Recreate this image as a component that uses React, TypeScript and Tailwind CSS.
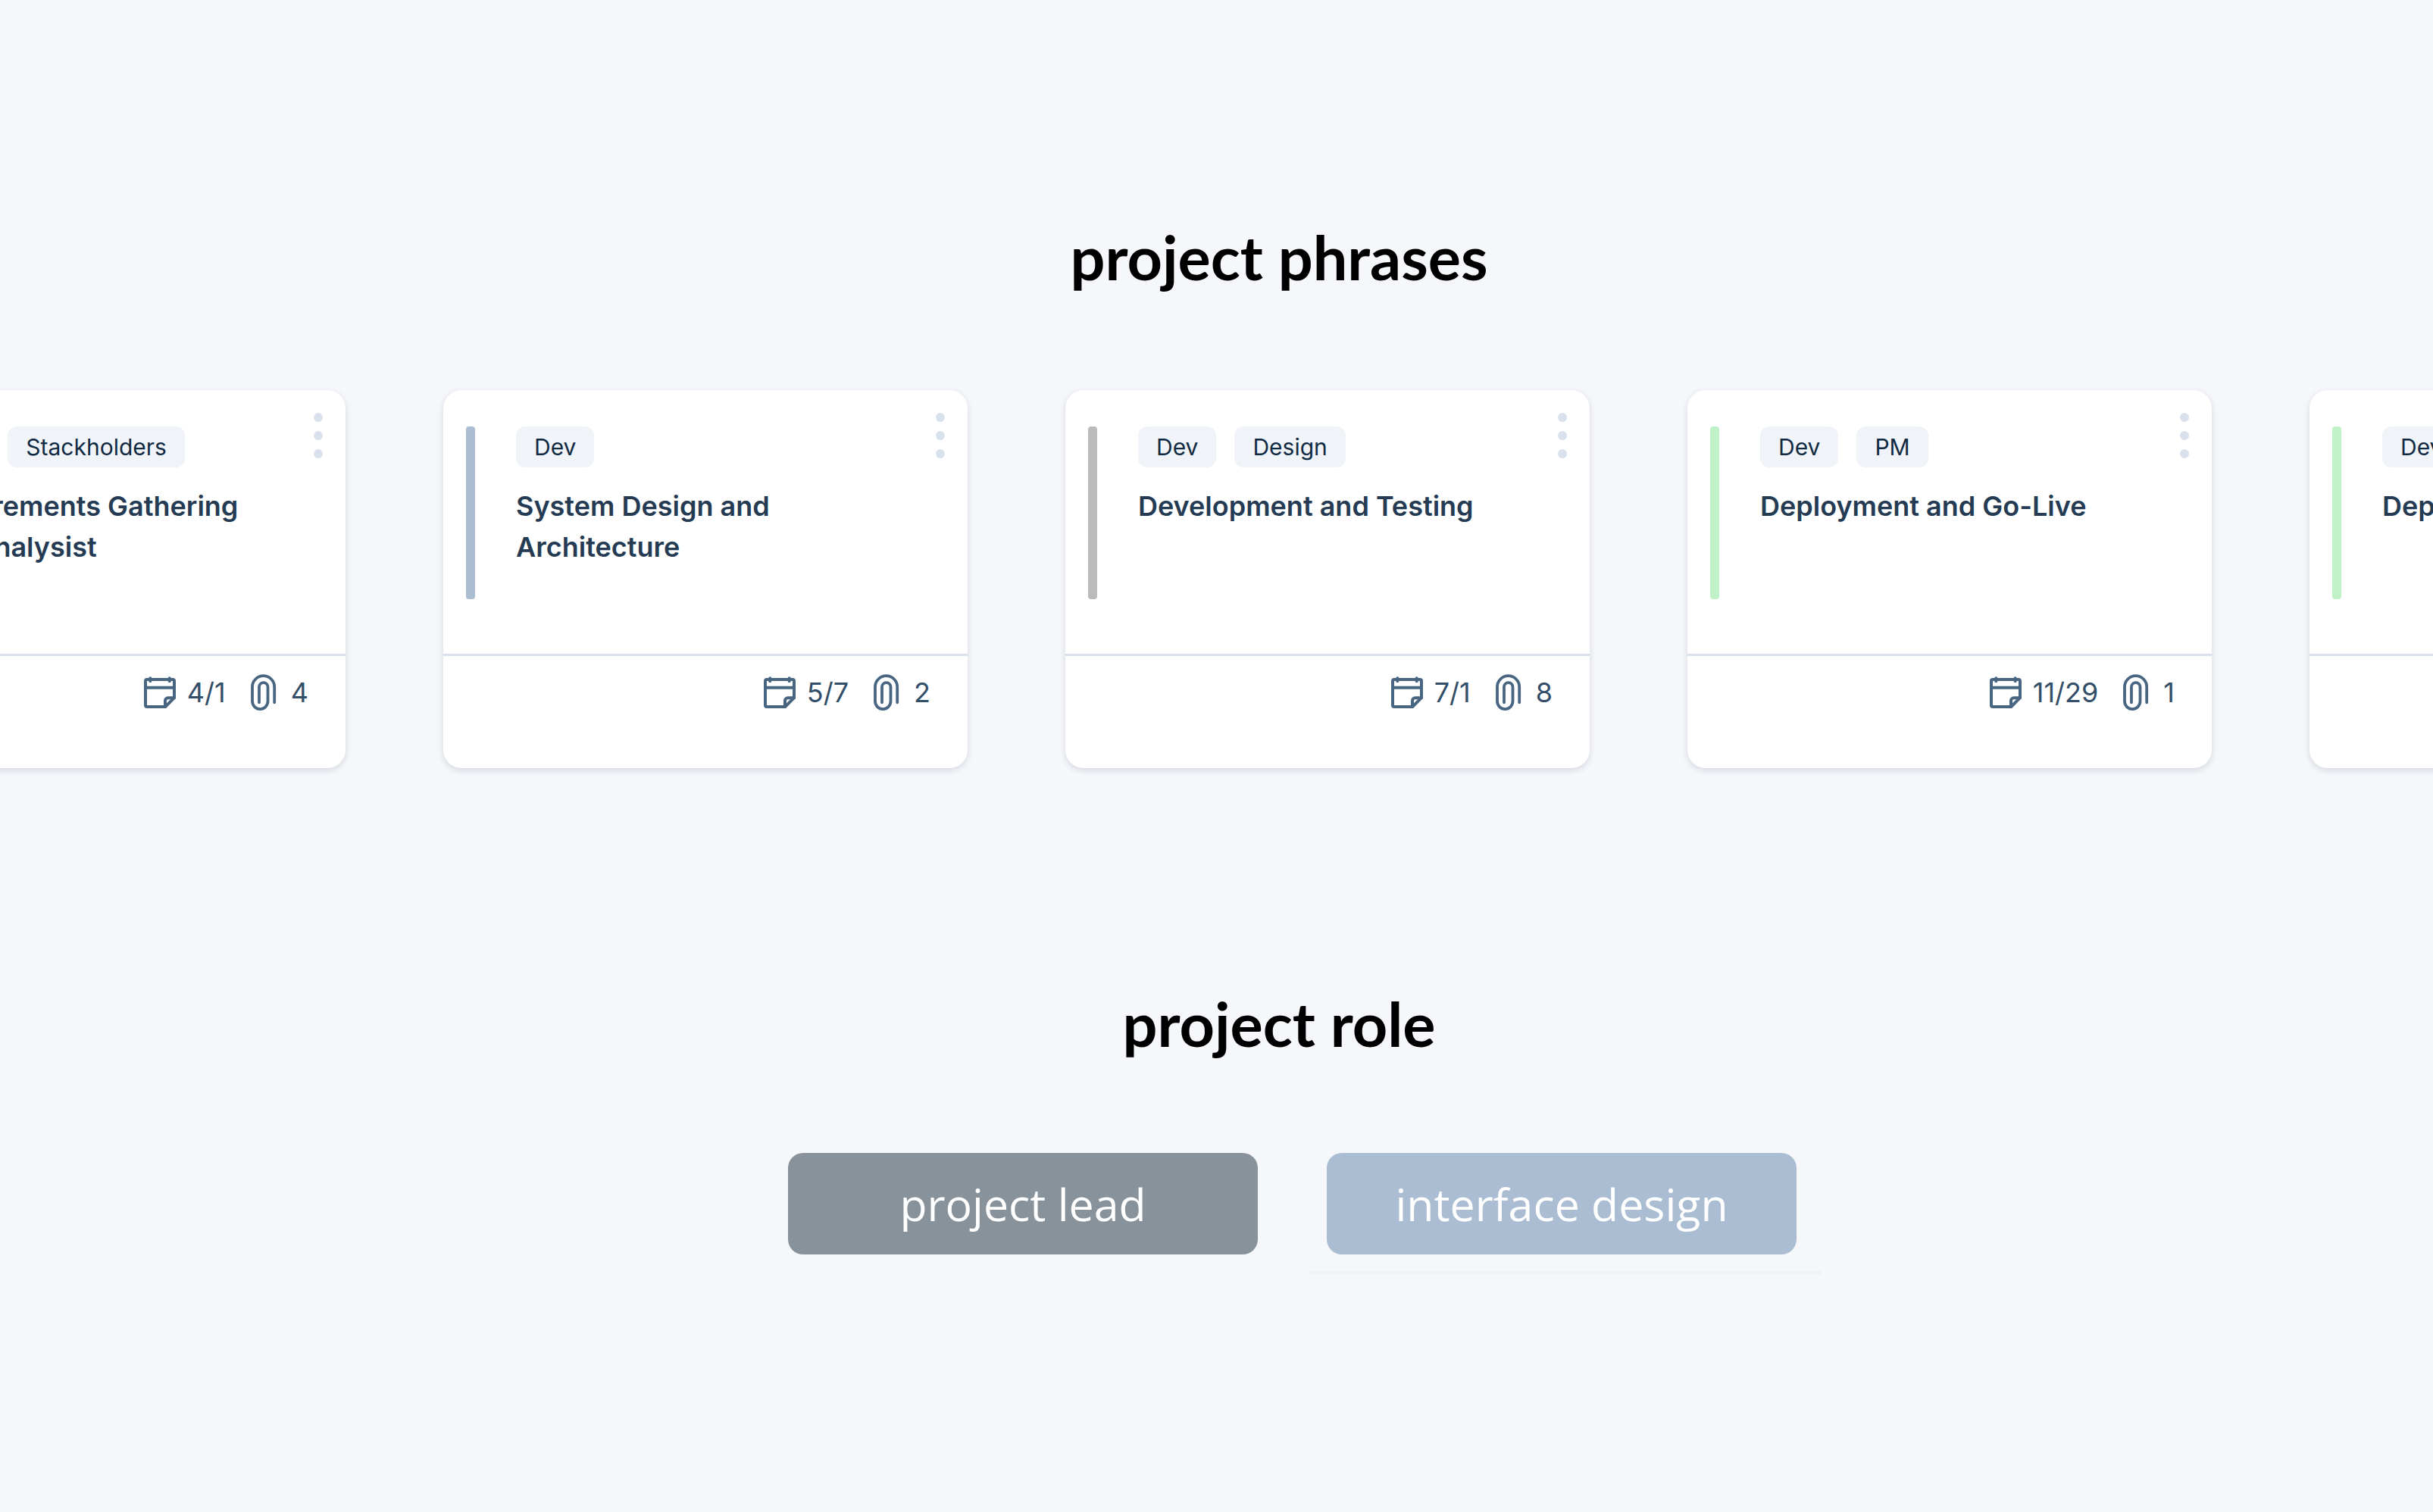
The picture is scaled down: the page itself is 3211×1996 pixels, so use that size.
type Phase = {
  id: string;
  width: string;
  accent: string;
  tags: string[];
  title: string;
  date: string;
  files: number;
};

const phases: Phase[] = [
  { id: "requirements", width: "w-[660px]", accent: "bg-[#f0c9c9]", tags: ["PM", "Stackholders"], title: "Requirements Gathering and Analysist", date: "4/1", files: 4 },
  { id: "architecture", width: "w-[692px]", accent: "bg-[#abbdd2]", tags: ["Dev"], title: "System Design and Architecture", date: "5/7", files: 2 },
  { id: "development", width: "w-[692px]", accent: "bg-[#bbbbbb]", tags: ["Dev", "Design"], title: "Development and Testing", date: "7/1", files: 8 },
  { id: "deployment", width: "w-[692px]", accent: "bg-[#c1f2c7]", tags: ["Dev", "PM"], title: "Deployment and Go-Live", date: "11/29", files: 1 },
  { id: "deployment-next", width: "w-[692px]", accent: "bg-[#c1f2c7]", tags: ["Dev", "PM"], title: "Deployment and Go-Live", date: "11/29", files: 1 },
];

function CalendarNote() {
  return (
    <svg viewBox="0 0 48 48" className="size-12" fill="none" stroke="#486581" strokeWidth="4" strokeLinecap="round" strokeLinejoin="round" aria-hidden="true">
      <path d="M31.2 43H7a2 2 0 0 1-2-2V9a2 2 0 0 1 2-2h34a2 2 0 0 1 2 2v22.2z" />
      <path d="M5 17.7h38" />
      <path d="M11.3 5.3v4M36.7 5.3v4" />
      <path d="M31 43v-8a3.7 3.7 0 0 1 3.7-3.7H43" />
    </svg>
  );
}

function PaperClip() {
  return (
    <svg viewBox="0 0 48 48" className="size-12" fill="none" stroke="#486581" strokeWidth="3.8" strokeLinecap="round" aria-hidden="true">
      <path d="M38.2 37.3V16.8a14.6 14.6 0 0 0-29.2 0v19a10.25 10.25 0 0 0 20.5 0v-19a5.75 5.75 0 0 0-11.5 0v20.5" />
    </svg>
  );
}

function PhaseCard({ phase }: { phase: Phase }) {
  return (
    <article className={`shrink-0 rounded-3xl bg-white shadow-[0_3px_9px_rgba(20,30,60,0.14)] ${phase.width}`}>
      <div className="flex h-[348px] items-start px-[30px] pt-[30px]">
        <div className={`mt-[18px] h-[228px] w-3 shrink-0 rounded-[4px] ${phase.accent}`} />
        <div className="mt-[18px] ml-[54px] w-[480px] shrink-0">
          <ul className="flex gap-6">
            {phase.tags.map((tag) => (
              <li key={tag} className="rounded-xl bg-[#f0f4f8] px-6 text-[30px] leading-[54px] text-[#102a43]">
                {tag}
              </li>
            ))}
          </ul>
          <h3 className="mt-6 text-4xl leading-[54px] font-semibold text-[#243b53]">{phase.title}</h3>
        </div>
        <button type="button" aria-label={`Options for ${phase.title}`} className="ml-auto flex flex-col gap-3">
          <span className="size-3 rounded-full bg-[#d9e2ec]" />
          <span className="size-3 rounded-full bg-[#d9e2ec]" />
          <span className="size-3 rounded-full bg-[#d9e2ec]" />
        </button>
      </div>
      <div className="flex items-center justify-end gap-[26px] border-t-3 border-[#d9e2ec] px-[49px] pt-6 pb-19 text-4xl leading-[48px] text-[#334e68]">
        <span className="flex items-center gap-3">
          <CalendarNote />
          {phase.date}
        </span>
        <span className="flex items-center gap-3">
          <PaperClip />
          {phase.files}
        </span>
      </div>
    </article>
  );
}

function SectionHeading({ children }: { children: string }) {
  return (
    <h2 className="pl-[165px] text-center font-['Lato',sans-serif] text-[81px] leading-24 font-bold text-black">{children}</h2>
  );
}

export default function App() {
  return (
    <main className="min-h-screen overflow-hidden bg-[#f5f7fb] pt-[291px] pb-[314px] font-['Inter',sans-serif]">
      <section>
        <SectionHeading>project phrases</SectionHeading>
        <div className="mt-32 flex justify-center gap-[129px] pl-[325px]">
          {phases.map((phase) => (
            <PhaseCard key={phase.id} phase={phase} />
          ))}
        </div>
      </section>

      <section className="mt-[289px]">
        <SectionHeading>project role</SectionHeading>
        <div className="mt-[123px] flex items-start justify-center gap-[67px] pl-[233px] font-['Open_Sans',sans-serif] text-[59px] text-white">
          <button type="button" className="h-[134px] w-[620px] rounded-[20px] bg-[#88929b]">
            project lead
          </button>
          <div className="border-b-4 border-[#eff3f7] pr-[33px] pb-[22px] pl-6">
            <button type="button" className="h-[134px] w-[620px] rounded-[20px] bg-[#abbdd2]">
              interface design
            </button>
          </div>
        </div>
      </section>
    </main>
  );
}
